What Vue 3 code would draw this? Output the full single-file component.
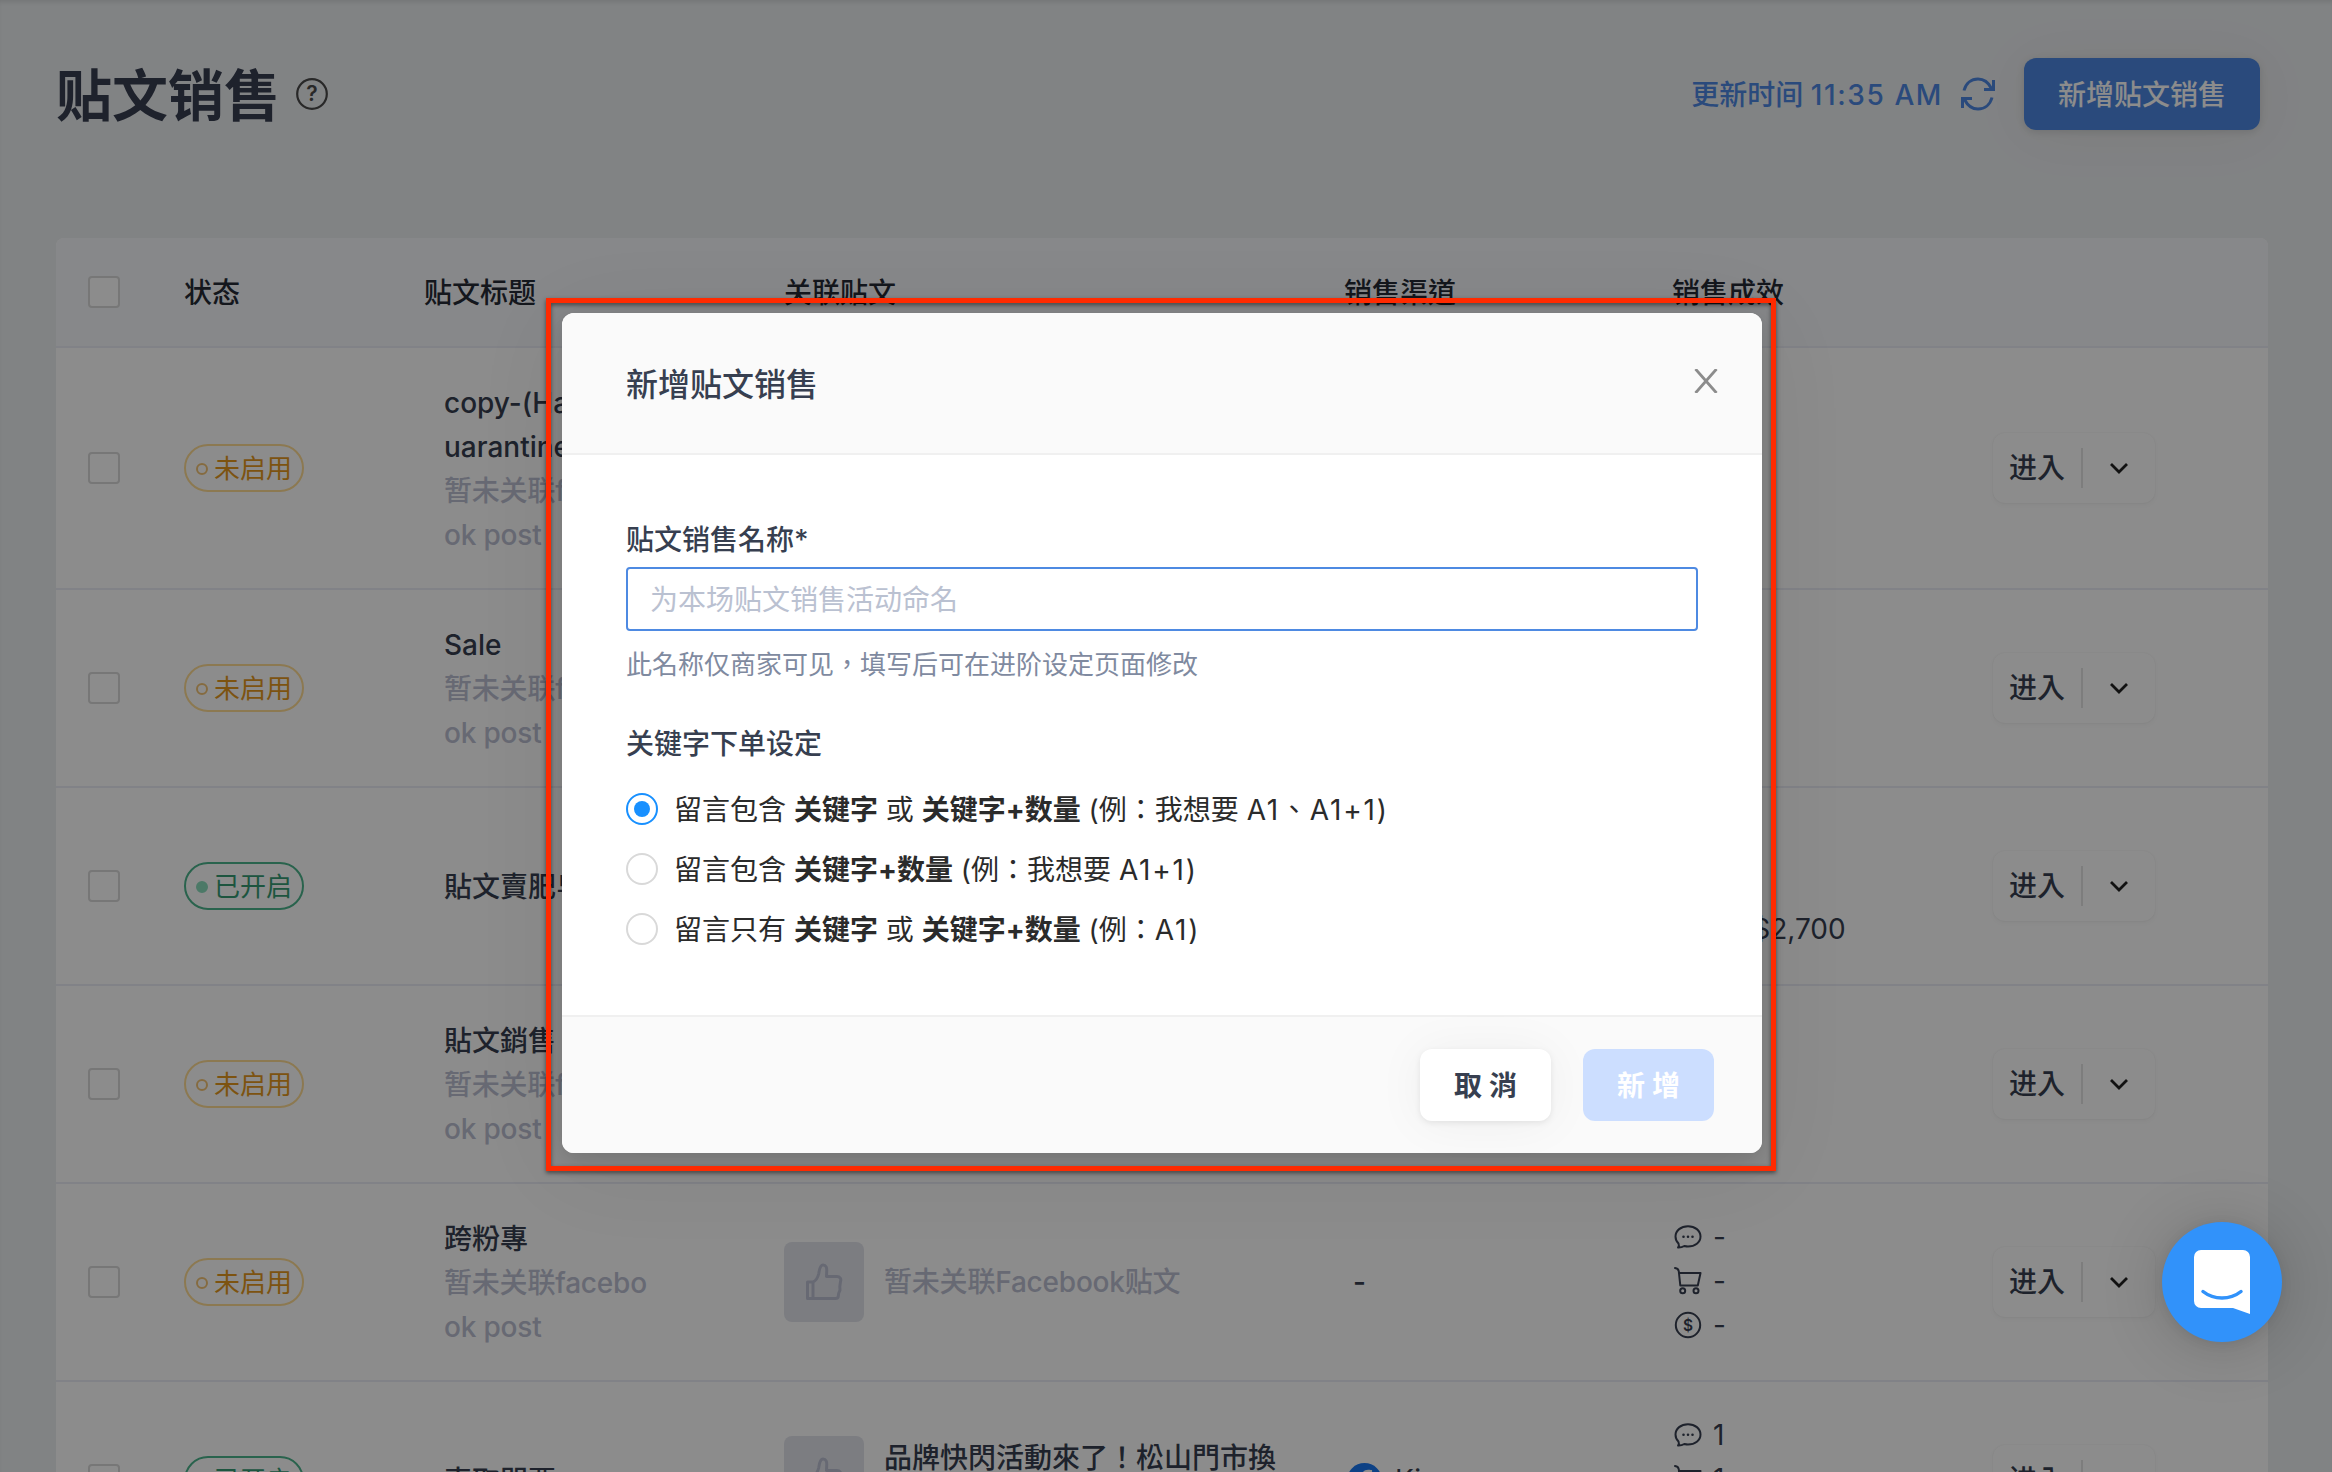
<template>
  <div class="page">
    <div class="page-header">
      <h1 class="page-title">贴文销售</h1>
      <svg class="help-icon" viewBox="0 0 32 32">
        <circle cx="16" cy="16" r="14.8" fill="none" stroke="currentColor" stroke-width="2.2" />
        <text x="16" y="23.2" text-anchor="middle">?</text>
      </svg>
      <div class="header-actions">
        <span class="update-time">更新时间 <span class="clock">11:35 AM</span></span>
        <svg class="refresh-icon" viewBox="0 0 36 34">
          <path d="M4 13.5C5.8 6.5 11.200 2 18 2c6 0 10.500 3.500 13.500 9.500M33.500 3v9.500H24" />
          <path d="M32 20.500C30.200 27.500 24.800 32 18 32c-6 0-10.500-3.500-13.500-9.500M2.500 31v-9.500H12" />
        </svg>
        <button class="primary-button">新增贴文销售</button>
      </div>
    </div>

    <div class="table">
      <div class="table-row table-head">
        <div class="cell-check"><span class="checkbox"></span></div>
        <div v-for="title in columns" :key="title" class="head-label">{{ title }}</div>
        <div></div>
      </div>

      <div
        v-for="row in rows"
        :key="row.id"
        class="table-row"
        :class="{ tall: row.title.length > 1 }"
      >
        <div class="cell-check"><span class="checkbox"></span></div>
        <div>
          <span class="tag" :class="row.active ? 'tag-on' : 'tag-off'">
            <i class="tag-dot"></i>{{ row.active ? '已开启' : '未启用' }}
          </span>
        </div>
        <div class="cell-title">
          <div v-for="line in row.title" :key="line">{{ line }}</div>
          <template v-if="!row.post">
            <div class="muted">暂未关联facebo</div>
            <div class="muted">ok post</div>
          </template>
        </div>
        <div class="cell-post" :class="{ top: row.post }">
          <div class="thumb">
            <svg viewBox="0 0 40 40">
              <path d="M3.500 20h5.500V36.500H3.500zM9 20c3-1 4.800-4.500 5.800-8.500.5-3.500 1-8.500 4.200-8.500 3.200 0 4 3 3.700 6.500L22.500 14.500H33c3 0 4.500 2.500 3.500 5l-.7 5.300.2 3.300-1.300 3.200-.3 2.200c0 2-1.200 3-3 3H9" />
            </svg>
          </div>
          <div v-if="row.post">
            <div v-for="line in row.post" :key="line">{{ line }}</div>
          </div>
          <div v-else class="muted">暂未关联Facebook贴文</div>
        </div>
        <div class="cell-channel">
          <template v-if="row.channel">
            <svg class="fb-icon" viewBox="0 0 36 36">
              <circle cx="18" cy="18" r="18" fill="#1877f2" />
              <path d="M15 36V23.500h-4.500V18H15v-4c0-4.500 2.700-7 6.800-7 1.900 0 4 .4 4 .4v4.400h-2.300c-2.200 0-2.900 1.400-2.900 2.800V18h5l-.8 5.500h-4.200V36z" fill="#fff" />
            </svg>
            <span>{{ row.channel }}</span>
          </template>
          <span v-else class="dash">-</span>
        </div>
        <div class="cell-stats">
          <div class="stat">
            <svg viewBox="0 0 28 28">
              <path d="M4.500 20.500C2.500 18.500 1.500 16 1.500 13.500 1.500 7.500 7 3.200 14 3.200s12.500 4.300 12.500 10.300S21 23.500 14 23.500c-1.500 0-2.500-.2-3.700-.5-1.800 1.200-4 1.700-6.300 1.600 1-1.200 1.200-2.600.5-4.100z" />
              <path d="M9.500 13.700h.01M14 13.700h.01M18.500 13.700h.01" stroke-width="2.600" />
            </svg>
            <span>{{ row.stats[0] }}</span>
          </div>
          <div class="stat">
            <svg viewBox="0 0 28 28">
              <path d="M1 1c2.500.3 3.500 1 3.800 3.500L6.300 18.500h17.500L26.500 6H5" />
              <circle cx="8.700" cy="23.800" r="2.500" />
              <circle cx="22" cy="23.800" r="2.500" />
            </svg>
            <span>{{ row.stats[1] }}</span>
          </div>
          <div class="stat">
            <svg viewBox="0 0 28 28">
              <circle cx="14" cy="14" r="12.200" />
              <text x="14" y="19.500" text-anchor="middle">$</text>
            </svg>
            <span>{{ row.stats[2] }}</span>
          </div>
        </div>
        <div>
          <div class="enter-button">
            <span class="enter-label">进入</span>
            <span class="enter-arrow">
              <svg viewBox="0 0 20 12"><path d="M2 2l8 8 8-8" /></svg>
            </span>
          </div>
        </div>
      </div>
    </div>

    <div class="mask">
      <div class="modal">
        <div class="modal-header">
          <span class="modal-title">新增贴文销售</span>
          <svg class="close-icon" viewBox="0 0 24 24"><path d="M1.500 0l21 24M22.500 0l-21 24" /></svg>
        </div>
        <div class="modal-body">
          <label class="field-label">贴文销售名称*</label>
          <input v-model="name" class="field-input" placeholder="为本场贴文销售活动命名" />
          <p class="field-help">此名称仅商家可见，填写后可在进阶设定页面修改</p>
          <div class="field-label">关键字下单设定</div>
          <div class="radio-list">
            <div
              v-for="(option, index) in options"
              :key="index"
              class="radio"
              :class="{ checked: selected === index }"
              @click="selected = index"
            >
              <i class="radio-circle"></i>
              <span class="radio-text">
                <template v-for="(part, i) in option.parts" :key="i">
                  <b v-if="i % 2">{{ part }}</b>
                  <template v-else>{{ part }}</template>
                </template>
                <span class="sample">{{ option.sample }}</span>
              </span>
            </div>
          </div>
        </div>
        <div class="modal-footer">
          <button class="footer-button cancel">取 消</button>
          <button class="footer-button submit" :disabled="!name">新 增</button>
        </div>
      </div>
    </div>

    <div class="chat-launcher">
      <svg viewBox="0 0 56 64">
        <path d="M7 0h42a7 7 0 0 1 7 7v57l-17-6H7a7 7 0 0 1-7-7V7a7 7 0 0 1 7-7z" fill="#fff" />
        <path d="M9 41.500c11 8.700 27 8.700 38 0" fill="none" stroke="#3192fa" stroke-width="3.500" stroke-linecap="round" />
      </svg>
    </div>
  </div>
</template>

<script setup>
import { ref } from 'vue'

const name = ref('')
const selected = ref(0)

const columns = ['状态', '贴文标题', '关联贴文', '销售渠道', '销售成效']

const rows = [
  { id: 1, active: false, title: ['copy-(Happy Q', 'uarantine)'], stats: ['-', '-', '-'] },
  { id: 2, active: false, title: ['Sale'], stats: ['-', '-', '-'] },
  { id: 3, active: true, title: ['貼文賣肥皂'], post: ['貼文賣肥皂'], channel: 'Kim', stats: ['3', '3', 'NT$2,700'] },
  { id: 4, active: false, title: ['貼文銷售'], stats: ['-', '-', '-'] },
  { id: 5, active: false, title: ['跨粉專'], stats: ['-', '-', '-'] },
  { id: 6, active: true, title: ['索取門票'], post: ['品牌快閃活動來了！松山門市換', '季活動'], channel: 'Kim', stats: ['1', '1', '-'] }
]

// нечётные части выводятся жирным
const options = [
  { parts: ['留言包含 ', '关键字', ' 或 ', '关键字+数量', ' (例：我想要 '], sample: 'A1、A1+1)' },
  { parts: ['留言包含 ', '关键字+数量', ' (例：我想要 '], sample: 'A1+1)' },
  { parts: ['留言只有 ', '关键字', ' 或 ', '关键字+数量', ' (例：'], sample: 'A1)' }
]
</script>

<style>
body {
  margin: 0;
  overflow: hidden;
}
</style>

<style scoped>
.page {
  position: relative;
  box-sizing: border-box;
  width: 2332px;
  height: 1472px;
  padding: 0 64px 0 56px;
  overflow: hidden;
  background: #eceef1;
  color: #373f50;
  font-family: Inter, "Noto Sans CJK TC", sans-serif;
  font-size: 28px;
  line-height: 44px;
}

button,
input {
  font-family: inherit;
  font-size: 28px;
}

/* Header */
.page-header {
  display: flex;
  align-items: center;
  height: 188px;
  margin-bottom: 50px;
}

.page-title {
  margin: 0 16px 0 0;
  padding-top: 3px;
  font-size: 56px;
  font-weight: 600;
  line-height: 80px;
}

.help-icon {
  width: 32px;
  height: 32px;
  color: #4a4a4a;
}

.help-icon text {
  fill: currentColor;
  font-size: 21px;
  font-weight: 600;
}

.header-actions {
  display: flex;
  align-items: center;
  margin-left: auto;
  margin-right: 8px;
}

.update-time {
  padding-top: 1px;
  color: #4e88e2;
  font-weight: 500;
}

.clock {
  letter-spacing: 1.6px;
}

.refresh-icon {
  width: 36px;
  height: 34px;
  margin: 0 28px 0 17px;
  fill: none;
  stroke: #4e88e2;
  stroke-width: 3;
}

.primary-button {
  width: 236px;
  height: 72px;
  padding: 0 0 2px;
  border: none;
  border-radius: 12px;
  background: #4e88e2;
  color: #fff;
  font-weight: 500;
  box-shadow: 0 2px 8px rgba(0, 0, 0, 0.12), 0 4px 60px rgba(80, 60, 0, 0.06);
}

/* Table */
.table {
  border-radius: 8px;
  overflow: hidden;
  background: #fff;
}

.table-row {
  display: grid;
  grid-template-columns: 128px 240px 360px 560px 328px 320px 276px;
  align-items: center;
  box-sizing: border-box;
  height: 198px;
  border-bottom: 2px solid #ecedf6;
}

.table-row.tall {
  height: 242px;
}

.table-head {
  height: 110px;
  background: #f6f8fb;
  color: #262b35;
  font-weight: 500;
}

.head-label {
  padding-top: 2px;
}

.cell-check {
  display: flex;
  padding-left: 32px;
}

.checkbox {
  box-sizing: border-box;
  width: 32px;
  height: 32px;
  border: 2px solid #d9d9d9;
  border-radius: 4px;
  background: #fff;
}

.tag {
  display: inline-flex;
  align-items: center;
  box-sizing: border-box;
  height: 48px;
  padding: 1px 10px 0;
  border: 2px solid;
  border-radius: 24px;
  font-size: 26px;
  vertical-align: top;
}

.tag-dot {
  box-sizing: border-box;
  width: 12px;
  height: 12px;
  margin-right: 6px;
  border: 2px solid;
  border-radius: 50%;
}

.tag-off {
  border-color: #ffdc94;
  color: #e3981e;
}

.tag-off .tag-dot {
  border-color: #f3c476;
}

.tag-on {
  border-color: #4cb48c;
  color: #369c74;
}

.tag-on .tag-dot {
  border-color: #8adcbc;
  background: #8adcbc;
}

.cell-title {
  padding: 1px 0 0 20px;
  font-weight: 500;
}

.muted {
  color: #bcc0d2;
  letter-spacing: -0.2px;
}

.cell-post {
  display: flex;
  align-items: center;
  gap: 20px;
  font-weight: 500;
}

.cell-post.top {
  align-items: flex-start;
}

.thumb {
  display: flex;
  align-items: center;
  justify-content: center;
  width: 80px;
  height: 80px;
  border-radius: 8px;
  background: #e2e4ec;
}

.thumb svg {
  width: 40px;
  height: 40px;
  fill: none;
  stroke: #bcc0d2;
  stroke-width: 3;
  stroke-linejoin: round;
}

.cell-channel {
  display: flex;
  align-items: center;
  gap: 13px;
  padding-left: 3px;
}

.dash {
  padding-left: 6px;
  font-weight: 500;
}

.fb-icon {
  width: 35px;
  height: 35px;
}

.cell-stats {
  padding-bottom: 3px;
}

.stat {
  display: flex;
  align-items: center;
  gap: 11px;
  height: 44px;
  padding-left: 2px;
}

.stat svg {
  width: 28px;
  height: 28px;
  overflow: visible;
  fill: none;
  stroke: currentColor;
  stroke-width: 2;
  stroke-linecap: round;
  stroke-linejoin: round;
}

.stat svg text {
  fill: currentColor;
  stroke: none;
  font-size: 15.500px;
  font-weight: 600;
}

.enter-button {
  display: flex;
  align-items: center;
  box-sizing: border-box;
  width: 162px;
  height: 70px;
  margin-left: 1px;
  border-radius: 12px;
  background: #fff;
  font-weight: 500;
  box-shadow: 0 0 2px rgba(0, 0, 0, 0.07), 0 2px 5px rgba(0, 0, 0, 0.04);
}

.enter-label {
  width: 90px;
  height: 40px;
  padding-left: 16px;
  box-sizing: border-box;
  border-right: 2px solid #e4e4e4;
  line-height: 41px;
}

.enter-arrow {
  display: flex;
  flex: 1;
  justify-content: center;
}

.enter-arrow svg {
  width: 20px;
  height: 12px;
  fill: none;
  stroke: #222;
  stroke-width: 2.800;
}

/* Modal */
.mask {
  position: absolute;
  inset: 0;
  background: rgba(0, 0, 0, 0.45);
  box-shadow: inset 0 4px 4px -2px rgba(0, 0, 0, 0.1);
}

.modal {
  position: relative;
  display: flex;
  flex-direction: column;
  width: 1200px;
  height: 840px;
  margin: 313px 0 0 562px;
  border-radius: 12px;
  background: #fff;
  box-shadow: 0 8px 24px rgba(0, 0, 0, 0.14), 0 12px 96px rgba(0, 0, 0, 0.07);
}

/* Red highlight around the modal */
.modal::after {
  content: "";
  position: absolute;
  inset: -15px -14px -18px -16px;
  border: 5px solid #ff2a00;
  filter: drop-shadow(0 2px 2px rgba(0, 0, 0, 0.5));
  pointer-events: none;
}

.modal-header {
  display: flex;
  align-items: center;
  justify-content: space-between;
  box-sizing: border-box;
  height: 142px;
  padding: 0 44px 0 64px;
  border-bottom: 2px solid #f0f0f0;
  border-radius: 12px 12px 0 0;
  background: #fafafa;
  font-size: 32px;
  font-weight: 500;
}

.modal-title {
  padding-top: 3px;
}

.close-icon {
  width: 24px;
  height: 24px;
  margin: 0 0 4px;
  fill: none;
  stroke: #8c8c8c;
  stroke-width: 2.800;
}

.modal-body {
  flex: 1;
  padding: 63px 64px 0;
}

.field-label {
  display: block;
  font-weight: 500;
}

.field-input {
  display: block;
  box-sizing: border-box;
  width: 1072px;
  height: 64px;
  margin-top: 5px;
  padding: 1px 22px 0;
  border: 2px solid #4e8ae2;
  border-radius: 4px;
  outline: none;
}

.field-input::placeholder {
  color: #bac1d1;
  opacity: 1;
}

.field-help {
  margin: 12px 0 35px;
  color: #7f8aa0;
  font-size: 26px;
}

.radio-list {
  margin-top: 13px;
}

.radio {
  display: flex;
  align-items: center;
  gap: 16px;
  height: 60px;
  color: #2b2b2b;
  white-space: pre;
}

.radio-text {
  padding-top: 1px;
}

.radio b {
  font-weight: 700;
}

.sample {
  letter-spacing: 1.800px;
}

.radio-circle {
  display: flex;
  align-items: center;
  justify-content: center;
  box-sizing: border-box;
  width: 32px;
  height: 32px;
  border: 2px solid #d9d9d9;
  border-radius: 50%;
}

.radio.checked .radio-circle {
  border-color: #1890ff;
}

.radio.checked .radio-circle::after {
  content: "";
  width: 16px;
  height: 16px;
  border-radius: 50%;
  background: #1890ff;
}

.modal-footer {
  display: flex;
  align-items: center;
  justify-content: flex-end;
  gap: 32px;
  box-sizing: border-box;
  height: 138px;
  padding: 0 48px 0 0;
  border-top: 2px solid #f0f0f0;
  border-radius: 0 0 12px 12px;
  background: #fafafa;
}

.footer-button {
  width: 131px;
  height: 72px;
  padding: 0 0 2px;
  border: none;
  border-radius: 12px;
  font-weight: 600;
}

.cancel {
  background: #fff;
  color: #373f50;
  box-shadow: 0 2px 6px rgba(0, 0, 0, 0.08), 0 2px 50px rgba(0, 0, 0, 0.05);
}

.submit {
  background: #ccdeff;
  color: #fff;
}

/* Chat launcher */
.chat-launcher {
  position: absolute;
  right: 50px;
  bottom: 130px;
  display: flex;
  align-items: center;
  justify-content: center;
  width: 120px;
  height: 120px;
  border-radius: 50%;
  background: #3192fa;
  box-shadow: 0 2px 12px rgba(0, 0, 0, 0.08), 0 4px 64px rgba(0, 0, 0, 0.18);
}

.chat-launcher svg {
  width: 56px;
  height: 64px;
}
</style>
